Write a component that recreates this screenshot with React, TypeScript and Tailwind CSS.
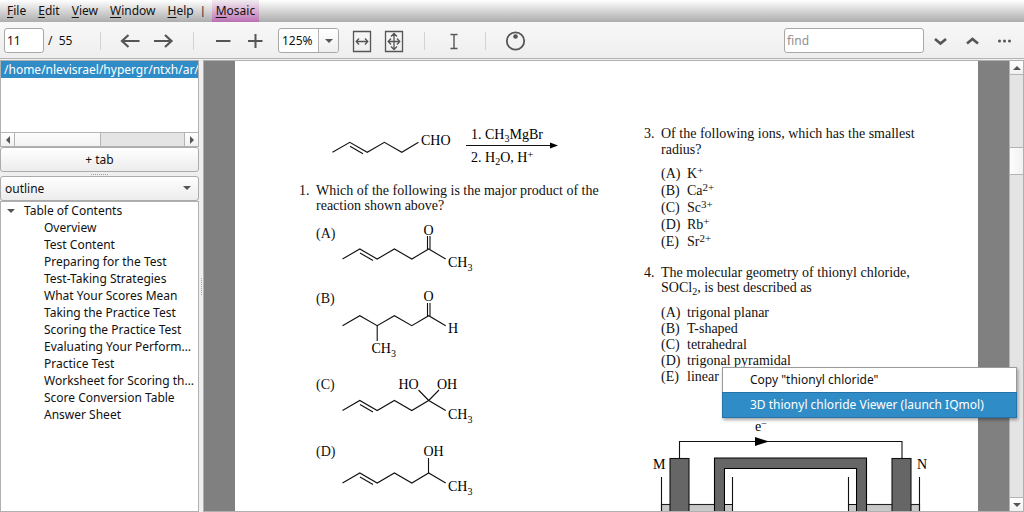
import React from "react";

const UI = "font-['Noto_Sans',sans-serif]";
const SERIF = "font-['Liberation_Serif',serif]";

const menus = ["File", "Edit", "View", "Window", "Help"];

const outline = [
  "Overview",
  "Test Content",
  "Preparing for the Test",
  "Test-Taking Strategies",
  "What Your Scores Mean",
  "Taking the Practice Test",
  "Scoring the Practice Test",
  "Evaluating Your Performance",
  "Practice Test",
  "Worksheet for Scoring the Test",
  "Score Conversion Table",
  "Answer Sheet",
];

function MenuBar() {
  return (
    <nav className="flex h-[22px] shrink-0 items-stretch bg-linear-to-b from-white to-[#adadad] pl-px">
      {menus.map((m) => (
        <button key={m} type="button" className="px-1.5 leading-[22px]">
          <span className="underline underline-offset-2">{m[0]}</span>
          {m.slice(1)}
        </button>
      ))}
      <span className="w-2 text-left text-[11px] leading-[20px]">|</span>
      <button
        type="button"
        className="ml-1 bg-linear-to-b from-[#f1ecf0] to-[#bb70b3] px-1 leading-[22px]"
      >
        <span className="underline underline-offset-2">M</span>osaic
      </button>
    </nav>
  );
}

function ToolButton({ label, children }: { label: string; children: React.ReactNode }) {
  return (
    <button type="button" aria-label={label} className="flex h-[33px] w-8 shrink-0 items-center justify-center pt-px">
      {children}
    </button>
  );
}

function Separator() {
  return <div className="mx-3.5 h-[18px] w-px shrink-0 bg-[#d2d2d2]" />;
}

function Icon({ children, w = 24, h = 24, sw = 2 }: { children: React.ReactNode; w?: number; h?: number; sw?: number }) {
  return (
    <svg width={w} height={h} viewBox={`0 0 ${w} ${h}`} fill="none" stroke="#555" strokeWidth={sw}>
      {children}
    </svg>
  );
}

const field = "h-[25px] rounded-[3px] border border-[#a8a8a8] bg-white outline-none";

function Toolbar() {
  return (
    <div className="flex h-[37px] shrink-0 items-center border-b border-[#b4b4b4] bg-linear-to-b from-[#f8f8f8] to-[#eeeeee] px-1 pt-px">
      <input aria-label="Page" defaultValue="11" className={`${field} w-10 px-0.5`} />
      <span className="ml-1 w-[38px] shrink-0 whitespace-pre">/  55</span>
      <Separator />
      <ToolButton label="Back">
        <Icon sw={2.2}>
          <path d="M20.500 12H3.500M9.500 6L3 12L9.500 18" />
        </Icon>
      </ToolButton>
      <ToolButton label="Forward">
        <Icon sw={2.2}>
          <path d="M3 12H20M14 6L20.500 12L14 18" />
        </Icon>
      </ToolButton>
      <Separator />
      <ToolButton label="Zoom out">
        <Icon>
          <path d="M4 12H18.500" />
        </Icon>
      </ToolButton>
      <ToolButton label="Zoom in">
        <Icon>
          <path d="M4 12H18.500M11.500 5V19" />
        </Icon>
      </ToolButton>
      <div className="relative ml-1.5 shrink-0">
        <select aria-label="Zoom" className={`${field} block w-[61px] appearance-none px-[3px]`}>
          <option>125%</option>
        </select>
        <div className="pointer-events-none absolute inset-y-px right-px flex w-5 items-center justify-center rounded-r-[2px] border-l border-[#b4b4b4] bg-linear-to-b from-white to-[#eeeeee]">
          <svg width="8" height="4" viewBox="0 0 8 4">
            <path d="M0 0H8L4 4Z" fill="#555" />
          </svg>
        </div>
      </div>
      <div className="ml-[7px] flex">
        <ToolButton label="Fit width">
          <Icon sw={1.3}>
            <path d="M3.500 2.500H20.500V22.500H3.500Z" />
            <path d="M6.500 12.500H17.500M9 9.500L6.200 12.500L9 15.500M15 9.500L17.800 12.500L15 15.500" />
          </Icon>
        </ToolButton>
        <ToolButton label="Fit page">
          <Icon sw={1.3}>
            <path d="M3.500 2.500H20.500V22.500H3.500Z" />
            <path d="M6.500 12.500H17.500M9 9.500L6.200 12.500L9 15.500M15 9.500L17.800 12.500L15 15.500M12 4.500V20.500M9 7.500L12 4.500L15 7.500M9 17.500L12 20.500L15 17.500" />
          </Icon>
        </ToolButton>
      </div>
      <Separator />
      <ToolButton label="Select text">
        <Icon sw={1.4}>
          <path d="M7.500 5.500H10C10.500 5.500 11 6 11 6C11 6 11.500 5.500 12 5.500H14.500M11 6V19M7.500 19.500H14.500" />
        </Icon>
      </ToolButton>
      <Separator />
      <ToolButton label="Rotate">
        <Icon>
          <circle cx="11.500" cy="12" r="8.700" strokeWidth="1.8" />
          <circle cx="11.500" cy="7.500" r="2.300" fill="#555" stroke="none" />
        </Icon>
      </ToolButton>
      <input
        aria-label="Find"
        placeholder="find"
        className={`${field} ml-auto w-[140px] px-0.5 placeholder:text-[#909090]`}
      />
      <div className="flex">
        <ToolButton label="Find next">
          <Icon sw={2.6}>
            <path d="M7 10L12.500 14.500L18 10" />
          </Icon>
        </ToolButton>
        <ToolButton label="Find previous">
          <Icon sw={2.6}>
            <path d="M7 14.500L12.500 10L18 14.500" />
          </Icon>
        </ToolButton>
        <ToolButton label="More">
          <svg width="24" height="24" viewBox="0 0 24 24" fill="#555">
            <circle cx="7.500" cy="12" r="1.500" />
            <circle cx="12.500" cy="12" r="1.500" />
            <circle cx="17.500" cy="12" r="1.500" />
          </svg>
        </ToolButton>
      </div>
    </div>
  );
}

function Arrow({ d }: { d: string }) {
  return (
    <svg width="8" height="8" viewBox="0 0 8 8">
      <path d={d} fill="#555" />
    </svg>
  );
}

const scrollButton = "flex shrink-0 items-center justify-center bg-linear-to-b from-white to-[#f0f0f0]";

function Sidebar() {
  return (
    <aside className="flex w-[199px] shrink-0 flex-col">
      <div className="flex h-[87px] shrink-0 flex-col border border-[#b0b0b0] bg-white">
        <div className="h-[17px] overflow-hidden bg-[#308cc6] pl-[3px] leading-[17px] whitespace-nowrap text-white">
          /home/nlevisrael/hypergr/ntxh/ar/
        </div>
        <div className="mt-auto flex h-[14px] border-t border-[#b4b4b4] bg-[#e4e4e4]">
          <button type="button" aria-label="Scroll left" className={`${scrollButton} w-[14px] border-r border-[#b4b4b4]`}>
            <Arrow d="M6 0V8L2 4Z" />
          </button>
          <div className="w-[86px] border-r border-[#b4b4b4] bg-linear-to-b from-[#fcfcfc] to-[#f2f2f2]" />
          <button
            type="button"
            aria-label="Scroll right"
            className={`${scrollButton} ml-auto w-[14px] border-l border-[#b4b4b4]`}
          >
            <Arrow d="M2 0V8L6 4Z" />
          </button>
        </div>
      </div>
      <button
        type="button"
        className="h-[25px] shrink-0 rounded-[3px] border border-[#ababab] bg-linear-to-b from-white to-[#ececec] leading-[23px]"
      >
        + tab
      </button>
      <div className="flex h-1 shrink-0 items-center justify-center">
        <div className="w-[17px] border-t border-dotted border-[#a0a0a0]" />
      </div>
      <div className="relative shrink-0">
        <select
          aria-label="Panel"
          className="block h-[25px] w-full appearance-none rounded-[3px] border border-[#ababab] bg-linear-to-b from-white to-[#ececec] px-1 outline-none"
        >
          <option>outline</option>
        </select>
        <svg className="pointer-events-none absolute top-2.5 right-2" width="8" height="4" viewBox="0 0 8 4">
          <path d="M0 0H8L4 4Z" fill="#555" />
        </svg>
      </div>
      <div className="min-h-0 flex-1 overflow-hidden border border-[#b0b0b0] bg-white leading-[17px]">
        <div className="flex items-center pl-1.5">
          <svg width="8" height="4" viewBox="0 0 8 4">
            <path d="M0 0H8L4 4Z" fill="#555" />
          </svg>
          <span className="ml-[9px]">Table of Contents</span>
        </div>
        <ul className="pr-0.5 pl-[43px]">
          {outline.map((t) => (
            <li key={t} className="truncate">
              {t}
            </li>
          ))}
        </ul>
      </div>
    </aside>
  );
}

/* Zig-zag carbon chain: `double` adds the inner stroke of the C=C bond. */
function Chain({ y, double = true, end = true }: { y: number; double?: boolean; end?: boolean }) {
  const xs = [0.5, 17.8, 35.2, 52.4, 69.8, end ? 86.7 : 86.5, 103.7];
  const pts = xs
    .slice(0, end ? 7 : 6)
    .map((x, i) => `${x},${i % 2 ? y : y + 10}`)
    .join(" ");
  return (
    <>
      <polyline points={pts} />
      {double && <path d={`M18 ${y + 4}L31 ${y + 11.5}`} />}
    </>
  );
}

function Label({ x, y, children }: { x: number; y: number; children: React.ReactNode }) {
  return (
    <text x={x} y={y} fill="#000" stroke="none">
      {children}
    </text>
  );
}

function Methyl({ x, y }: { x: number; y: number }) {
  return (
    <Label x={x} y={y}>
      CH
      <tspan dy="4" fontSize="10">
        3
      </tspan>
    </Label>
  );
}

function Drawing({ w, h, label, children }: { w: number; h: number; label: string; children: React.ReactNode }) {
  return (
    <svg
      width={w}
      height={h}
      viewBox={`0 0 ${w} ${h}`}
      role="img"
      aria-label={label}
      className="block shrink-0 overflow-visible text-[14px]"
      fill="none"
      stroke="#111"
      strokeWidth="1.1"
    >
      {children}
    </svg>
  );
}

function Answer({ letter, children }: { letter: string; children: React.ReactNode }) {
  return (
    <div className="flex">
      <span className="w-[26px] leading-[18px]">({letter})</span>
      {children}
    </div>
  );
}

function LeftColumn() {
  return (
    <div className="w-[345px] shrink-0 pt-[59px]">
      <div className="pl-[33px]">
        <Drawing w={230} h={63} label="Reaction scheme">
          <Chain y={22.3} end={false} />
          <Label x={89} y={25}>CHO</Label>
          <Label x={139} y={19}>
            1. CH<tspan dy="3" fontSize="10">3</tspan>
            <tspan dy="-3">MgBr</tspan>
          </Label>
          <path d="M134 25.500H220" />
          <path d="M218 22.500L226 25.500L218 28.500Z" fill="#000" stroke="none" />
          <Label x={139} y={42}>
            2. H<tspan dy="3" fontSize="10">2</tspan>
            <tspan dy="-3">O, H</tspan>
            <tspan dy="-4" fontSize="11">+</tspan>
          </Label>
        </Drawing>
      </div>
      <div className="flex">
        <span className="w-[17px] shrink-0">1.</span>
        <p className="whitespace-nowrap">
          Which of the following is the major product of the
          <br />
          reaction shown above?
        </p>
      </div>
      <div className="mt-3 flex flex-col pl-[17px]">
        <Answer letter="A">
          <Drawing w={135} h={65} label="Ketone">
            <Chain y={24} />
            <path d="M85.500 11V24M88 11V24" />
            <Label x={81.500} y={10}>O</Label>
            <Methyl x={106} y={42} />
          </Drawing>
        </Answer>
        <Answer letter="B">
          <Drawing w={135} h={86} label="Branched aldehyde">
            <Chain y={25.700} double={false} />
            <path d="M85.500 13V26M88 13V26M35.200 35.700V51" />
            <Label x={81.500} y={11}>O</Label>
            <Label x={106} y={43}>H</Label>
            <Methyl x={29.500} y={63} />
          </Drawing>
        </Answer>
        <Answer letter="C">
          <Drawing w={135} h={67} label="Geminal diol">
            <Chain y={24.500} />
            <path d="M86.700 24.500L76.500 14M86.700 24.500L97 14" />
            <Label x={56.500} y={13}>HO</Label>
            <Label x={95} y={13}>OH</Label>
            <Methyl x={106} y={43} />
          </Drawing>
        </Answer>
        <Answer letter="D">
          <Drawing w={135} h={60} label="Alcohol">
            <Chain y={30} />
            <path d="M86.500 15V30" />
            <Label x={81.500} y={13}>OH</Label>
            <Methyl x={106} y={48} />
          </Drawing>
        </Answer>
      </div>
    </div>
  );
}

const ions = [
  ["A", "K", "+"],
  ["B", "Ca", "2+"],
  ["C", "Sc", "3+"],
  ["D", "Rb", "+"],
  ["E", "Sr", "2+"],
];

const shapes = [
  ["A", "trigonal planar"],
  ["B", "T-shaped"],
  ["C", "tetrahedral"],
  ["D", "trigonal pyramidal"],
  ["E", "linear"],
];

function Cell() {
  return (
    <Drawing w={280} h={110} label="Electrochemical cell">
      <g fill="#c8c8c8" stroke="#222">
        <rect x="11.500" y="84.500" width="71" height="30" />
        <rect x="198.500" y="84.500" width="71" height="30" />
      </g>
      <path d="M11.500 57V110M82.500 57V110M198.500 57V110M269.500 57V110" />
      <path d="M64.500 115V38H216.500V115H206.500V48.500H74.500V115Z" fill="#666" stroke="#000" />
      <path d="M75 84V49H206V115H75Z" fill="#fff" stroke="none" />
      <path d="M75 84.500H82.500V115H75ZM198.500 84.500H206V115H198.500Z" fill="#c8c8c8" stroke="none" />
      <path d="M75 84.500H82.500M198.500 84.500H206M82.500 57V110M198.500 57V110" />
      <path d="M29.500 38V21.500H252V38" />
      <rect x="20" y="38.500" width="19" height="80" fill="#666" />
      <rect x="242" y="38.500" width="19" height="80" fill="#666" />
      <path d="M105 17L119 21.500L105 26Z" fill="#000" stroke="none" />
      <Label x={105} y={11}>
        e<tspan dy="-4" fontSize="10">−</tspan>
      </Label>
      <Label x={3} y={49}>M</Label>
      <Label x={267} y={49}>N</Label>
    </Drawing>
  );
}

function RightColumn() {
  return (
    <div className="min-w-0 flex-1 pt-[65px]">
      <div className="flex leading-4">
        <span className="w-[17px] shrink-0">3.</span>
        <p className="whitespace-nowrap">
          Of the following ions, which has the smallest
          <br />
          radius?
        </p>
      </div>
      <ol className="mt-[7px] pl-[17px] leading-[17px]">
        {ions.map(([l, el, charge]) => (
          <li key={l} className="flex">
            <span className="w-[26px]">({l})</span>
            <span>
              {el}
              <sup className="top-[-4px] text-[11px] leading-none">{charge}</sup>
            </span>
          </li>
        ))}
      </ol>
      <div className="mt-[15px] flex leading-[15px]">
        <span className="w-[17px] shrink-0">4.</span>
        <p className="whitespace-nowrap">
          The molecular geometry of thionyl chloride,
          <br />
          SOCl<sub className="text-[10px] leading-none">2</sub>, is best described as
        </p>
      </div>
      <ol className="mt-[10px] pl-[17px] leading-4">
        {shapes.map(([l, t]) => (
          <li key={l} className="flex">
            <span className="w-[26px]">({l})</span>
            <span>{t}</span>
          </li>
        ))}
      </ol>
      <div className="mt-[35px] pl-[6px]">
        <Cell />
      </div>
    </div>
  );
}

function Viewer() {
  return (
    <main className="flex min-w-0 flex-1 border border-[#b0b0b0] bg-[#808080]">
      <div
        className={`${SERIF} ml-[31px] flex min-w-0 flex-1 overflow-hidden bg-white pl-16 text-[14px] leading-[15px]`}
      >
        <LeftColumn />
        <RightColumn />
      </div>
      <div className="ml-[31px] flex w-[14px] shrink-0 flex-col border-l border-[#b4b4b4] bg-[#e4e4e4]">
        <button type="button" aria-label="Scroll up" className={`${scrollButton} h-[14px] border-b border-[#b4b4b4]`}>
          <Arrow d="M0 6H8L4 2Z" />
        </button>
        <div className="mt-[72px] h-7 border-y border-[#b4b4b4] bg-linear-to-r from-[#fcfcfc] to-[#f2f2f2]" />
        <button
          type="button"
          aria-label="Scroll down"
          className={`${scrollButton} mt-auto h-[14px] border-t border-[#b4b4b4]`}
        >
          <Arrow d="M0 2H8L4 6Z" />
        </button>
      </div>
    </main>
  );
}

function ContextMenu() {
  return (
    <div
      role="menu"
      className="absolute top-[367px] right-[7px] flex w-[295px] flex-col border border-[#9a9a9a] bg-white shadow-[1px_2px_3px_rgba(0,0,0,0.35)]"
    >
      <button type="button" role="menuitem" className="h-6 pl-[27px] text-left">
        Copy "thionyl chloride"
      </button>
      <button
        type="button"
        role="menuitem"
        className="-mx-px -mb-px h-[26px] border border-[#2573a8] bg-[#308cc6] pl-[27px] text-left text-white"
      >
        3D thionyl chloride Viewer (launch IQmol)
      </button>
    </div>
  );
}

export default function App() {
  return (
    <div className={`${UI} relative flex h-screen flex-col overflow-hidden bg-[#efefef] text-[12px] text-[#111]`}>
      <MenuBar />
      <Toolbar />
      <div className="flex min-h-0 flex-1 pt-px">
        <Sidebar />
        <div className="flex w-1 shrink-0 items-center justify-center">
          <div className="h-[17px] border-l border-dotted border-[#a0a0a0]" />
        </div>
        <Viewer />
      </div>
      <ContextMenu />
    </div>
  );
}
